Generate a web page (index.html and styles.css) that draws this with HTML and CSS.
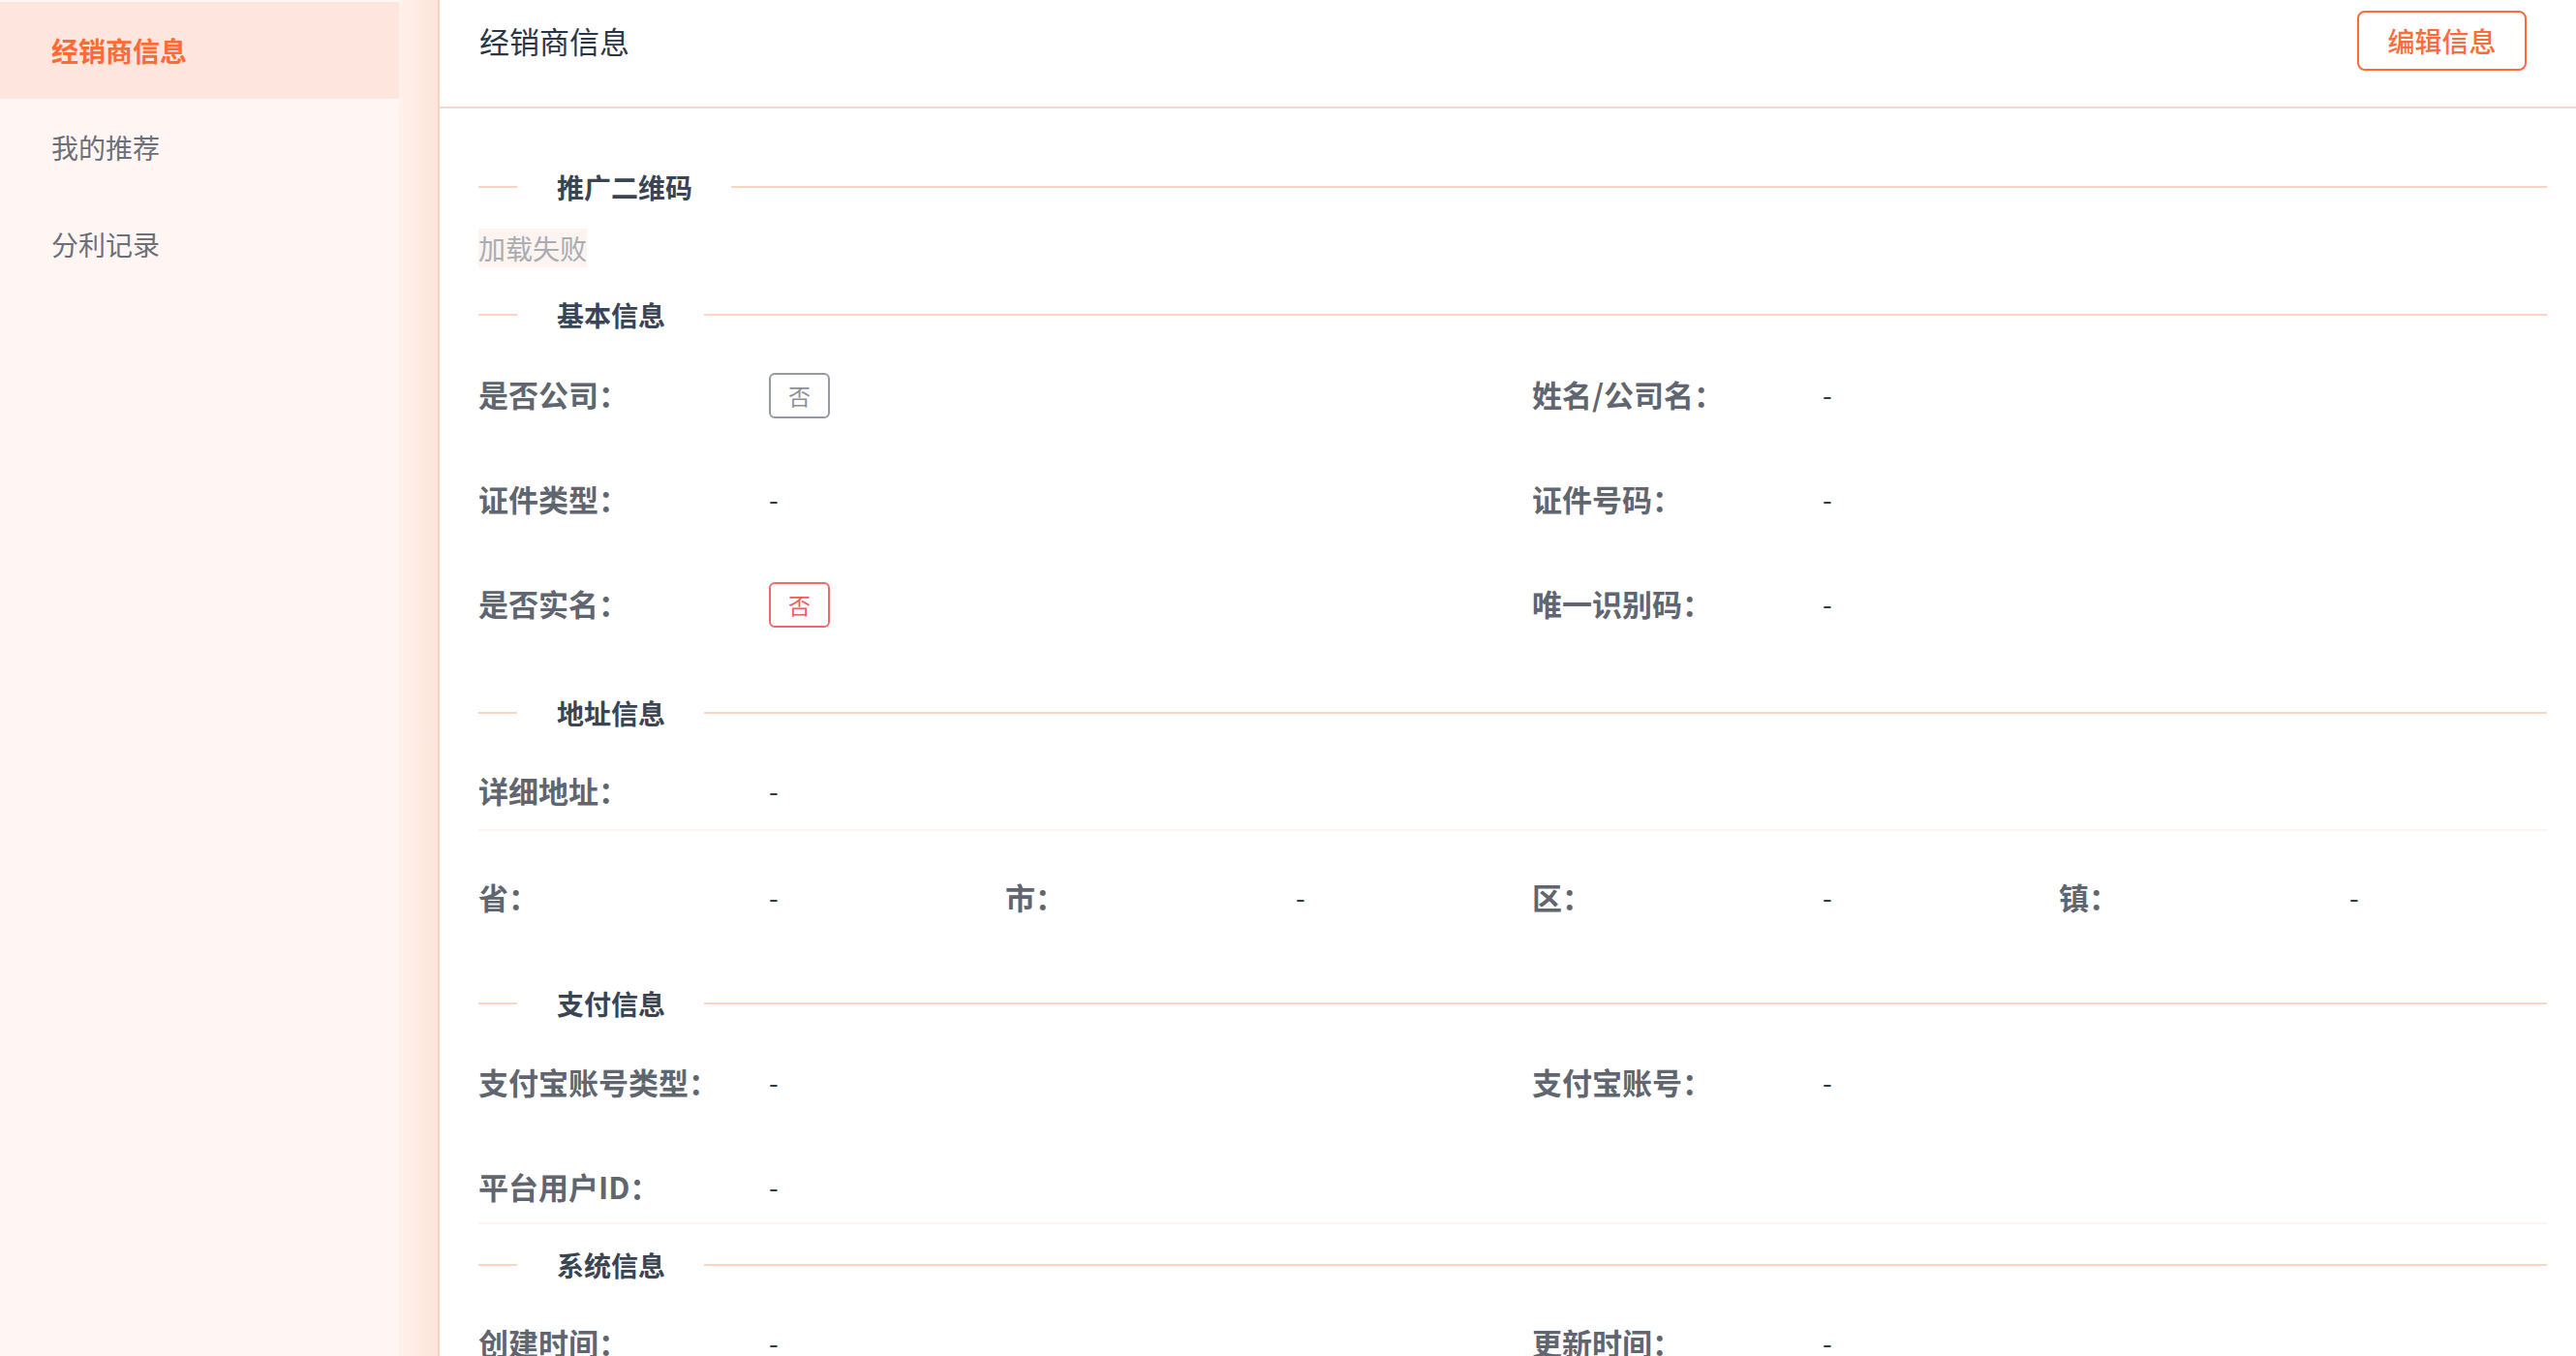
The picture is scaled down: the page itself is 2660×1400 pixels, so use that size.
FILE: index.html
```html
<!DOCTYPE html>
<html lang="zh-CN">
<head>
<meta charset="utf-8">
<title>经销商信息</title>
<link rel="stylesheet" href="styles.css">
</head>
<body>
<div class="layout">
  <aside class="sidebar">
    <div class="nav-item active">经销商信息</div>
    <div class="nav-item">我的推荐</div>
    <div class="nav-item">分利记录</div>
  </aside>
  <div class="splitter"></div>
  <main class="main">
    <header class="header">
      <h1 class="page-title">经销商信息</h1>
      <button class="btn-edit">编辑信息</button>
    </header>
    <div class="content">
      <div class="sec-title t1"><span>推广二维码</span></div>
      <div class="img-error">加载失败</div>

      <div class="sec-title t2"><span>基本信息</span></div>
      <div class="grid2 g-basic">
        <div class="field"><span class="label">是否公司：</span><span class="tag tag-gray">否</span></div>
        <div class="field"><span class="label">姓名/公司名：</span><span class="value">-</span></div>
        <div class="field"><span class="label">证件类型：</span><span class="value">-</span></div>
        <div class="field"><span class="label">证件号码：</span><span class="value">-</span></div>
        <div class="field"><span class="label">是否实名：</span><span class="tag tag-red">否</span></div>
        <div class="field"><span class="label">唯一识别码：</span><span class="value">-</span></div>
      </div>

      <div class="sec-title t3"><span>地址信息</span></div>
      <div class="grid1 g-addr">
        <div class="field"><span class="label">详细地址：</span><span class="value">-</span></div>
      </div>
      <div class="hr hr1"></div>
      <div class="grid4 g-region">
        <div class="field"><span class="label">省：</span><span class="value">-</span></div>
        <div class="field"><span class="label">市：</span><span class="value">-</span></div>
        <div class="field"><span class="label">区：</span><span class="value">-</span></div>
        <div class="field"><span class="label">镇：</span><span class="value">-</span></div>
      </div>

      <div class="sec-title t4"><span>支付信息</span></div>
      <div class="grid2 g-pay">
        <div class="field"><span class="label">支付宝账号类型：</span><span class="value">-</span></div>
        <div class="field"><span class="label">支付宝账号：</span><span class="value">-</span></div>
        <div class="field"><span class="label">平台用户ID：</span><span class="value">-</span></div>
      </div>
      <div class="hr hr2"></div>

      <div class="sec-title t5"><span>系统信息</span></div>
      <div class="grid2 g-sys">
        <div class="field"><span class="label">创建时间：</span><span class="value">-</span></div>
        <div class="field"><span class="label">更新时间：</span><span class="value">-</span></div>
      </div>
    </div>
  </main>
</div>
</body>
</html>
```
FILE: styles.css
```css
* { box-sizing: border-box; }
html, body { margin: 0; padding: 0; height: 100%; overflow: hidden; }
body {
  font-family: "Noto Sans CJK SC", "Noto Sans", sans-serif;
  background: #ffffff;
  color: #303a45;
}
.layout { display: flex; height: 100vh; }

.sidebar {
  width: 412px;
  flex: none;
  background: #fff6f4;
  padding-top: 2px;
}
.nav-item {
  height: 100px;
  display: flex;
  align-items: center;
  padding-left: 53px;
  font-size: 28px;
  color: #6b7079;
}
.nav-item.active {
  background: #fee6df;
  color: #ff6a35;
  font-weight: 600;
}

.splitter {
  width: 42px;
  flex: none;
  background: linear-gradient(to right, #fff1ec, #fee4da);
  border-right: 2px solid #fcd3c3;
}

.main { flex: 1; overflow: hidden; background: #fff; }

.header {
  height: 112px;
  border-bottom: 2px solid #fdd6ca;
  display: flex;
  justify-content: space-between;
  align-items: flex-start;
  padding: 11px 51px 0 41px;
}
.page-title {
  margin: 0;
  font-size: 31px;
  font-weight: 400;
  line-height: 62px;
  color: #2a3646;
}
.btn-edit {
  width: 175px;
  height: 62px;
  border: 2px solid #ff6b3b;
  border-radius: 8px;
  background: #fff;
  color: #ff6b3b;
  font-family: inherit;
  font-size: 28px;
  font-weight: 500;
  padding: 0;
}

.content { padding: 0 30px 0 40px; }

.sec-title {
  display: flex;
  align-items: center;
  height: 40px;
  font-size: 28px;
  font-weight: 600;
  color: #3a4452;
}
.sec-title::before {
  content: "";
  width: 40px;
  height: 2px;
  background: #fdd3c4;
}
.sec-title span { padding: 0 40px 0 41px; line-height: 40px; }
.sec-title::after {
  content: "";
  flex: 1;
  height: 2px;
  background: #fdd3c4;
}
.t1 { margin-top: 61px; }
.t2 { margin-top: 29px; }
.t3 { margin-top: 62px; }
.t4 { margin-top: 59px; }
.t5 { margin-top: 22px; }

.img-error {
  margin-top: 23px;
  width: 112px;
  height: 40px;
  line-height: 40px;
  background: #fdf3ef;
  color: #a9acb3;
  font-size: 28px;
}

.grid1, .grid2, .grid4 {
  display: grid;
  column-gap: 40px;
  row-gap: 48px;
  grid-auto-rows: 60px;
}
.grid1 { grid-template-columns: 1fr; }
.grid2 { grid-template-columns: 1fr 1fr; }
.grid4 { grid-template-columns: 1fr 1fr 1fr 1fr; }

.g-basic { margin-top: 33px; }
.g-addr { margin-top: 31px; }
.g-region { margin-top: 39px; }
.g-pay { margin-top: 32px; }
.g-sys { margin-top: 31px; }

.field { display: flex; align-items: center; }
.label {
  width: 300px;
  flex: none;
  font-size: 31px;
  font-weight: 600;
  color: #5f6670;
  margin-bottom: 4px;
}
.value { font-size: 28px; color: #2f3a45; margin-bottom: 2px; }

.tag {
  width: 63px;
  height: 47px;
  display: inline-flex;
  align-items: center;
  justify-content: center;
  border-radius: 6px;
  font-size: 23px;
  background: #fff;
}
.tag-gray { border: 2px solid #959aa2; color: #8b9098; }
.tag-red { border: 2px solid #f06a6a; color: #ee5c5c; }

.hr { height: 2px; background: #fdf3ef; }
.hr1 { margin-top: 9px; }
.hr2 { margin-top: 6px; }
```
